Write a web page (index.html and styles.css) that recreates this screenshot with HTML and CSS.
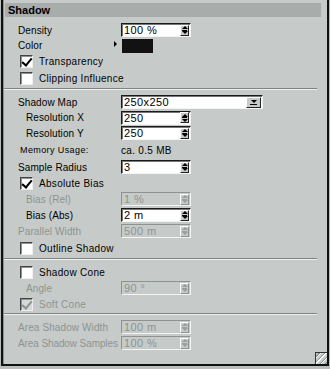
FILE: index.html
```html
<!DOCTYPE html>
<html lang="en">
<head>
    <meta charset="UTF-8">
    <title>Shadow</title>
    <link rel="stylesheet" href="styles.css">
</head>
<body>
    <div class="panel">
        <div class="head">Shadow</div>
        <div class="content">
            <div class="row">
                <span class="lbl">Density</span>
                <span class="field"><span class="val">100 %</span><span class="spin"></span></span>
            </div>
            <div class="row h15">
                <span class="lbl">Color</span>
                <span class="color"><span class="tri"></span><span class="swatch"></span></span>
            </div>
            <div class="row h17 chk-row">
                <span class="box checked"></span><span>Transparency</span>
            </div>
            <div class="row h17 chk-row">
                <span class="box"></span><span>Clipping Influence</span>
            </div>

            <div class="sep"></div>

            <div class="row">
                <span class="lbl">Shadow Map</span>
                <span class="field select"><span class="val">250x250</span><span class="drop"></span></span>
            </div>
            <div class="row h15">
                <span class="lbl in">Resolution X</span>
                <span class="field"><span class="val">250</span><span class="spin"></span></span>
            </div>
            <div class="row">
                <span class="lbl in">Resolution Y</span>
                <span class="field"><span class="val">250</span><span class="spin"></span></span>
            </div>
            <div class="row h18 small">
                <span class="lbl mem">Memory Usage:</span>
                <span class="plain">ca. 0.5 MB</span>
            </div>
            <div class="row">
                <span class="lbl">Sample Radius</span>
                <span class="field"><span class="val">3</span><span class="spin"></span></span>
            </div>
            <div class="row chk-row">
                <span class="box checked"></span><span>Absolute Bias</span>
            </div>
            <div class="row off">
                <span class="lbl in">Bias (Rel)</span>
                <span class="field"><span class="val">1 %</span><span class="spin"></span></span>
            </div>
            <div class="row">
                <span class="lbl in">Bias (Abs)</span>
                <span class="field"><span class="val">2 m</span><span class="spin"></span></span>
            </div>
            <div class="row off">
                <span class="lbl">Parallel Width</span>
                <span class="field"><span class="val">500 m</span><span class="spin"></span></span>
            </div>
            <div class="row h18 chk-row">
                <span class="box"></span><span>Outline Shadow</span>
            </div>

            <div class="sep"></div>

            <div class="row chk-row">
                <span class="box"></span><span>Shadow Cone</span>
            </div>
            <div class="row off">
                <span class="lbl in">Angle</span>
                <span class="field"><span class="val">90 °</span><span class="spin"></span></span>
            </div>
            <div class="row chk-row off">
                <span class="box checked"></span><span>Soft Cone</span>
            </div>

            <div class="sep"></div>

            <div class="row off">
                <span class="lbl">Area Shadow Width</span>
                <span class="field"><span class="val">100 m</span><span class="spin"></span></span>
            </div>
            <div class="row off">
                <span class="lbl tight">Area Shadow Samples</span>
                <span class="field"><span class="val">100 %</span><span class="spin"></span></span>
            </div>
        </div>
        <div class="grip"></div>
    </div>
</body>
</html>
```

FILE: styles.css
```css
* {
    box-sizing: border-box;
}

body {
    margin: 0;
    background: #b9bdbb;
    font-family: "Liberation Sans", Arial, sans-serif;
    font-size: 10px;
    color: #000;
}

.panel {
    position: relative;
    width: 328px;
    height: 366px;
    margin-left: 1px;
    background: #c6cbc9;
    border: 2px solid #111;
    border-top: 0;
    box-shadow: inset 1px 0 0 #8d9290;
    padding-top: 3px;
}

.head {
    height: 14px;
    margin: 0 6px 0 2px;
    padding-left: 3px;
    background: #a8acab;
    font-weight: bold;
    font-size: 11px;
    line-height: 14px;
}

.content {
    padding-top: 5px;
    width: 314px;
}

.row {
    display: flex;
    align-items: center;
    height: 16px;
}

.h15 { height: 15px; }
.h17 { height: 17px; }
.h18 { height: 18px; }

.lbl {
    width: 118px;
    padding-left: 15px;
    letter-spacing: 0.1px;
    white-space: nowrap;
}

.lbl.in {
    padding-left: 23px;
}

.lbl.tight {
    letter-spacing: -0.1px;
}

.lbl.mem {
    padding-left: 17px;
    font-size: 9px;
    letter-spacing: 0.4px;
}

.plain {
    font-size: 10px;
    letter-spacing: 0.3px;
}

.off {
    color: #8e9391;
}

/* text field with spinner */
.field {
    display: flex;
    align-items: center;
    width: 70px;
    height: 14px;
    background: #fff;
    border-top: 1px solid #1a1a1a;
    border-left: 1px solid #1a1a1a;
    border-right: 1px solid #f4f4f4;
    border-bottom: 1px solid #f4f4f4;
    box-shadow: inset 1px 1px 0 #777;
    padding-left: 2px;
    font-size: 11px;
    letter-spacing: 0.4px;
}

.off .field {
    background: #c6cbc9;
    border-color: #8e9391 #f4f4f4 #f4f4f4 #8e9391;
    box-shadow: none;
}

.val {
    flex: 1;
    white-space: nowrap;
}

.spin {
    display: flex;
    flex-direction: column;
    align-items: center;
    justify-content: center;
    gap: 2px;
    width: 9px;
    height: 11px;
    margin-right: 1px;
    background: #c6cbc9 linear-gradient(#000, #000) no-repeat center / 5px 1px;
    border: 1px solid;
    border-color: #fff #222 #222 #fff;
}

.spin::before,
.spin::after {
    content: "";
    border-left: 3px solid transparent;
    border-right: 3px solid transparent;
}

.spin::before {
    border-bottom: 3px solid #000;
}

.spin::after {
    border-top: 3px solid #000;
}

.off .spin {
    background-image: linear-gradient(#9a9f9d, #9a9f9d);
    border-color: #fff #8e9391 #8e9391 #fff;
}

.off .spin::before {
    border-bottom-color: #9a9f9d;
}

.off .spin::after {
    border-top-color: #9a9f9d;
}

/* dropdown */
.field.select {
    width: 142px;
    height: 14px;
}

.drop {
    display: flex;
    flex-direction: column;
    align-items: center;
    justify-content: center;
    gap: 1px;
    width: 15px;
    height: 11px;
    margin-right: 1px;
    background: #c6cbc9;
    border: 1px solid;
    border-color: #fff #222 #222 #fff;
}

.drop::before {
    content: "";
    border-left: 3px solid transparent;
    border-right: 3px solid transparent;
    border-top: 3px solid #000;
}

.drop::after {
    content: "";
    width: 7px;
    height: 1px;
    background: #000;
}

/* color */
.color {
    display: flex;
    align-items: center;
}

.tri {
    width: 0;
    height: 0;
    margin-left: -7px;
    margin-right: 5px;
    margin-top: -4px;
    border-top: 3px solid transparent;
    border-bottom: 3px solid transparent;
    border-left: 3px solid #000;
}

.swatch {
    width: 31px;
    height: 14px;
    background: #121212;
}

/* checkboxes */
.chk-row {
    padding-left: 17px;
    gap: 6px;
    letter-spacing: 0.3px;
}

.box {
    position: relative;
    width: 13px;
    height: 13px;
    background: #fff;
    border-top: 1px solid #444;
    border-left: 1px solid #444;
    border-right: 1px solid #eee;
    border-bottom: 1px solid #eee;
    box-shadow: 1px 1px 0 #8e9391 inset;
}

.box.checked::after {
    content: "";
    position: absolute;
    left: 3px;
    top: 0px;
    width: 4px;
    height: 8px;
    border-right: 2px solid #000;
    border-bottom: 2px solid #000;
    transform: rotate(40deg);
}

.off .box {
    background: #d6dad8;
}

.off .box.checked::after {
    border-color: #8e9391;
}

.sep {
    height: 2px;
    margin: 1px 0 4px 1px;
    border-top: 1px solid #7f8482;
    border-bottom: 1px solid #eef0ef;
}

/* resize grip in the corner */
.grip {
    position: absolute;
    right: 0;
    bottom: 0;
    width: 12px;
    height: 12px;
    border-top: 1px solid #333;
    border-left: 1px solid #333;
    background: repeating-linear-gradient(135deg, #c6cbc9 0 2px, #8e9391 2px 3px, #fff 3px 4px);
}
```
